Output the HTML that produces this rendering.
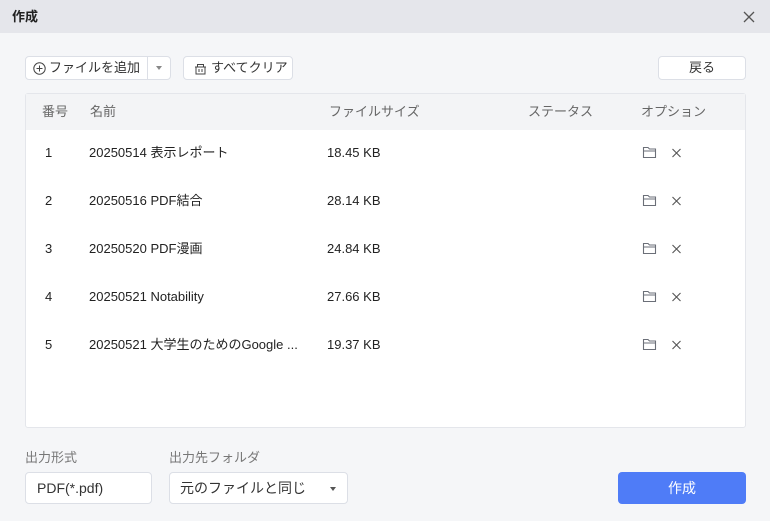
<!DOCTYPE html><html><head><meta charset="utf-8"><style>
*{margin:0;padding:0;box-sizing:border-box}
body{width:770px;height:521px;background:#f5f6f8;font-family:"Liberation Sans","Noto Sans CJK JP",sans-serif;color:#222;position:relative;overflow:hidden;font-size:13px;line-height:16px}
.abs{position:absolute}
.hdr{left:0;top:0;width:770px;height:33px;background:#e5e6eb}
.btn{background:#fff;border:1px solid #dcdfe6;border-radius:4px;height:24px;display:flex;align-items:center;font-size:13px;color:#333}
.tbl{left:25px;top:93px;width:721px;height:335px;background:#fff;border:1px solid #e4e6eb;border-radius:3px}
.th{position:absolute;top:0;left:0;width:719px;height:36px;background:#f3f4f6}
.t{position:absolute;font-size:13px;line-height:16px;height:16px;white-space:nowrap}
.h{color:#666;top:10px}
.lbl{color:#777;font-size:13px}
</style></head><body>
<div class="abs hdr"></div>
<div class="abs" style="left:12px;top:9px;font-weight:bold;font-size:13px">作成</div>
<svg class="abs" style="left:743px;top:11px" width="12" height="12"><path d="M1 1L11 11M11 1L1 11" stroke="#555" stroke-width="1.3"/></svg>

<div class="abs btn" style="left:25px;top:56px;width:146px;">
<svg style="margin-left:7px" width="13" height="13"><circle cx="6.5" cy="6.5" r="5.7" fill="none" stroke="#444" stroke-width="1"/><path d="M6.5 3.5v6M3.5 6.5h6" stroke="#444"/></svg>
<span style="margin-left:3px">ファイルを追加</span>
<span style="position:absolute;left:121px;top:0;height:22px;border-left:1px solid #dcdfe6"></span>
<span style="position:absolute;left:130px;top:9px;border:3px solid transparent;border-top:4px solid #888"></span>
</div>
<div class="abs btn" style="left:183px;top:56px;width:110px;">
<svg style="margin-left:10px" width="13" height="13"><path d="M2 5h9v7H2zM1 5h11M3.5 5V2.5h6V5M5 7v3M8 7v3" fill="none" stroke="#444" stroke-width="1"/></svg>
<span style="margin-left:4px">すべてクリア</span></div>
<div class="abs btn" style="left:658px;top:56px;width:88px;justify-content:center">戻る</div>

<div class="abs tbl"><div class="th"></div>
<div class="t h" style="left:16px">番号</div>
<div class="t h" style="left:64px">名前</div>
<div class="t h" style="left:303px">ファイルサイズ</div>
<div class="t h" style="left:502px">ステータス</div>
<div class="t h" style="left:615px">オプション</div>
</div>
<div class="abs" style="left:25px;top:93px;width:721px">
<div class="t" style="left:20px;top:52px">1</div><div class="t" style="left:64px;top:52px">20250514 表示レポート</div><div class="t" style="left:302px;top:52px">18.45 KB</div>
<div class="t" style="left:20px;top:100px">2</div><div class="t" style="left:64px;top:100px">20250516 PDF結合</div><div class="t" style="left:302px;top:100px">28.14 KB</div>
<div class="t" style="left:20px;top:148px">3</div><div class="t" style="left:64px;top:148px">20250520 PDF漫画</div><div class="t" style="left:302px;top:148px">24.84 KB</div>
<div class="t" style="left:20px;top:196px">4</div><div class="t" style="left:64px;top:196px">20250521 Notability</div><div class="t" style="left:302px;top:196px">27.66 KB</div>
<div class="t" style="left:20px;top:244px">5</div><div class="t" style="left:64px;top:244px">20250521 大学生のためのGoogle ...</div><div class="t" style="left:302px;top:244px">19.37 KB</div>
</div>
<svg class="abs" style="left:642px;top:146px" width="50" height="220">
<defs><g id="r"><path d="M1.5 11.5V1.5h4.5l1.5 1.5h6v8.5zM1.5 5h12" fill="none" stroke="#6b6f78" stroke-width="1.1"/><path d="M30.5 3l8 8M38.5 3l-8 8" stroke="#555" stroke-width="1.1"/></g></defs>
<use href="#r" y="0"/><use href="#r" y="48"/><use href="#r" y="96"/><use href="#r" y="144"/><use href="#r" y="192"/>
</svg>

<div class="abs lbl" style="left:25px;top:450px">出力形式</div>
<div class="abs lbl" style="left:169px;top:450px">出力先フォルダ</div>
<div class="abs btn" style="left:25px;top:472px;width:127px;height:32px;padding-left:11px;font-size:14px">PDF(*.pdf)</div>
<div class="abs btn" style="left:169px;top:472px;width:179px;height:32px;padding-left:10px;font-size:14px">元のファイルと同じ<span style="position:absolute;left:160px;top:14px;border:3px solid transparent;border-top:4px solid #555"></span></div>
<div class="abs" style="left:618px;top:472px;width:128px;height:32px;background:#4f7cf7;border-radius:4px;color:#fff;font-size:14px;display:flex;align-items:center;justify-content:center">作成</div>
</body></html>
